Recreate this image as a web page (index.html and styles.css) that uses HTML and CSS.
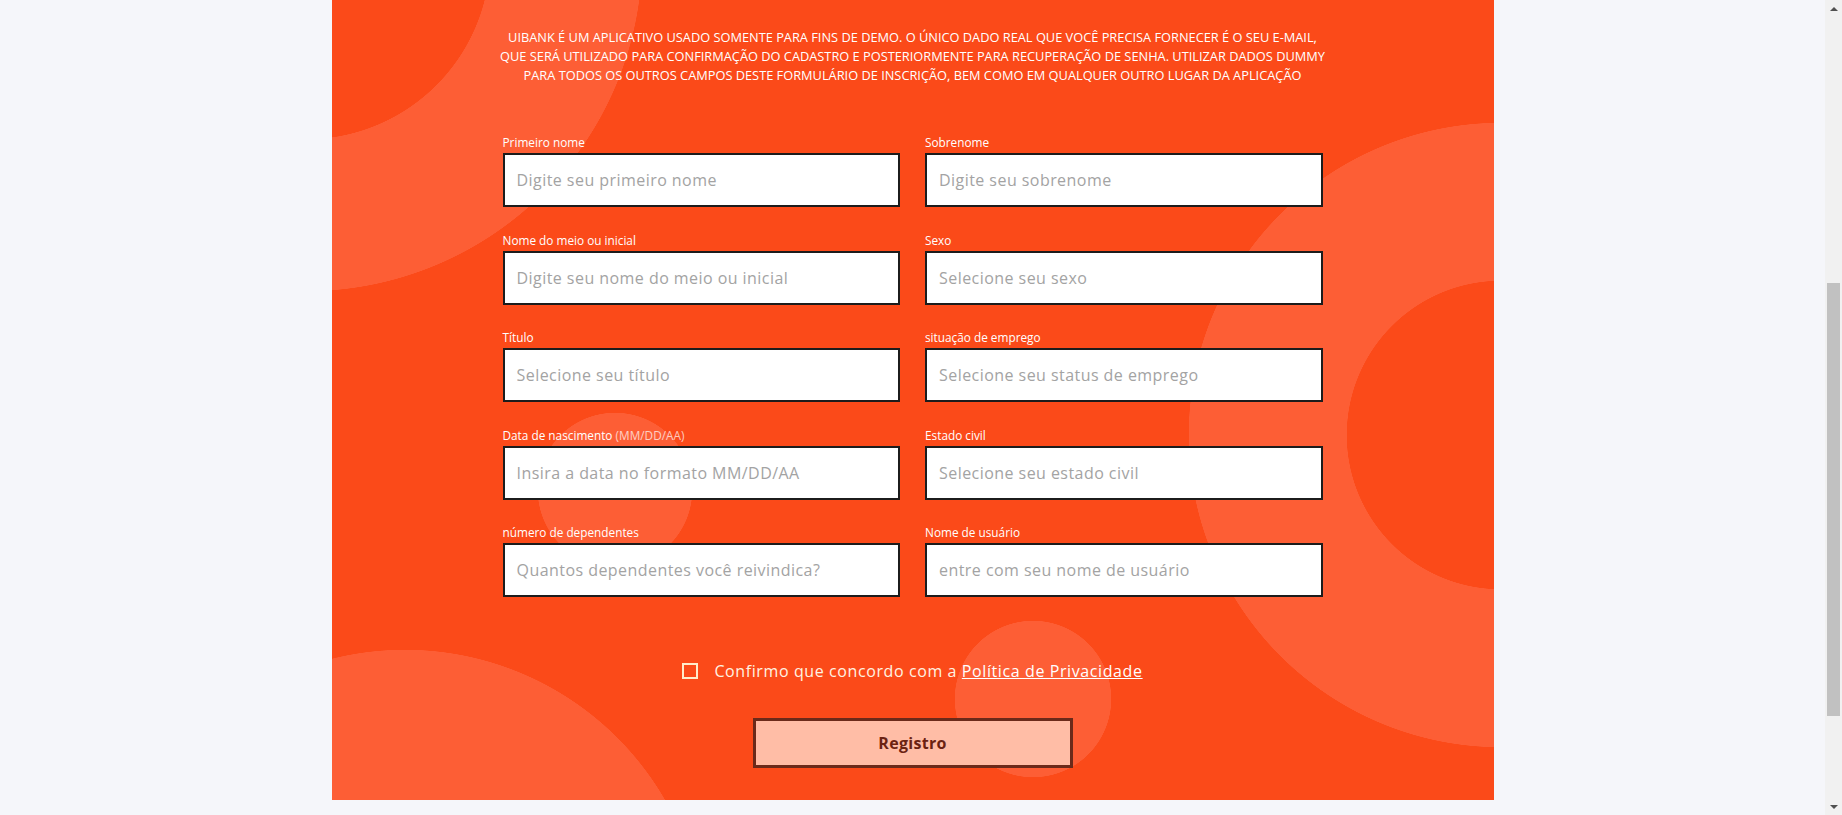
FILE: index.html
```html
<!DOCTYPE html>
<html lang="pt-BR">
<head>
<meta charset="utf-8">
<title>UIBank - Registro</title>
<link rel="stylesheet" href="styles.css">
</head>
<body>
<main class="panel">
  <section class="panel-body">
    <p class="intro">UIBANK É UM APLICATIVO USADO SOMENTE PARA FINS DE DEMO. O ÚNICO DADO REAL QUE VOCÊ PRECISA FORNECER É O SEU E-MAIL,<br>QUE SERÁ UTILIZADO PARA CONFIRMAÇÃO DO CADASTRO E POSTERIORMENTE PARA RECUPERAÇÃO DE SENHA. UTILIZAR DADOS DUMMY<br>PARA TODOS OS OUTROS CAMPOS DESTE FORMULÁRIO DE INSCRIÇÃO, BEM COMO EM QUALQUER OUTRO LUGAR DA APLICAÇÃO</p>
    <form class="form">
      <div class="grid">
        <label class="field"><span class="label">Primeiro nome</span><input class="input" type="text" placeholder="Digite seu primeiro nome"></label>
        <label class="field"><span class="label">Sobrenome</span><input class="input" type="text" placeholder="Digite seu sobrenome"></label>
        <label class="field"><span class="label">Nome do meio ou inicial</span><input class="input" type="text" placeholder="Digite seu nome do meio ou inicial"></label>
        <label class="field"><span class="label">Sexo</span><input class="input" type="text" placeholder="Selecione seu sexo"></label>
        <label class="field"><span class="label">Título</span><input class="input" type="text" placeholder="Selecione seu título"></label>
        <label class="field"><span class="label">situação de emprego</span><input class="input" type="text" placeholder="Selecione seu status de emprego"></label>
        <label class="field"><span class="label">Data de nascimento <span class="hint">(MM/DD/AA)</span></span><input class="input" type="text" placeholder="Insira a data no formato MM/DD/AA"></label>
        <label class="field"><span class="label">Estado civil</span><input class="input" type="text" placeholder="Selecione seu estado civil"></label>
        <label class="field"><span class="label">número de dependentes</span><input class="input" type="text" placeholder="Quantos dependentes você reivindica?"></label>
        <label class="field"><span class="label">Nome de usuário</span><input class="input" type="text" placeholder="entre com seu nome de usuário"></label>
      </div>
      <label class="agree"><span class="box"></span><span>Confirmo que concordo com a <a class="link" href="#">Política de Privacidade</a></span></label>
      <div class="actions"><button class="submit" type="button">Registro</button></div>
    </form>
  </section>
</main>
<div class="scrollbar" aria-hidden="true">
  <div class="sb-btn"><span class="sb-up"></span></div>
  <div class="sb-track"><div class="sb-thumb"></div></div>
  <div class="sb-btn"><span class="sb-down"></span></div>
</div>
</body>
</html>
```
FILE: styles.css
```css
html, body {
  margin: 0;
  padding: 0;
}
body {
  background: #f5f6fa;
  font-family: "Open Sans", "Noto Sans", sans-serif;
  padding-right: 17px;
}
.panel {
  max-width: 1162px;
  margin: 0 auto 15px;
  background: #fb4a19;
}
.panel-body {
  height: 800px;
  box-sizing: border-box;
  padding-top: 28px;
  overflow: hidden;
  background:
    radial-gradient(circle at 283px 490px, #fd5e35 77px, transparent 77.5px),
    radial-gradient(circle at 701px 699px, #fd5e35 78px, transparent 78.5px),
    radial-gradient(circle at -26px -45px, transparent 184px, #fd5e35 184.5px, #fd5e35 336px, transparent 336.5px),
    radial-gradient(circle at 1169px 435px, transparent 154px, #fd5e35 154.5px, #fd5e35 312px, transparent 312.5px),
    radial-gradient(circle at 73px 950px, #fd5e35 300px, transparent 300.5px),
    #fb4a19;
}
.intro {
  margin: 0 auto;
  text-align: center;
  color: #fff;
  font-size: 12.8px;
  line-height: 19px;
}
.form {
  width: 820px;
  margin: 49px auto 0;
}
.grid {
  display: grid;
  grid-template-columns: 1fr 1fr;
  column-gap: 25px;
  row-gap: 24.5px;
}
.field {
  display: flex;
  flex-direction: column;
  gap: 3px;
}
.label {
  color: #fff;
  font-size: 11.8px;
  line-height: 16px;
}
.hint {
  opacity: 0.7;
}
.input {
  box-sizing: border-box;
  height: 54px;
  border: 2px solid #1c1c1c;
  background: #fff;
  padding: 0 12px;
  font-family: inherit;
  font-size: 16px;
  letter-spacing: 0.45px;
  color: #333;
  outline: none;
}
.input::placeholder {
  color: #a3a3a3;
}
.agree {
  margin-top: 62px;
  display: flex;
  align-items: center;
  justify-content: center;
  gap: 16px;
  color: #fff3e2;
  font-size: 16px;
  letter-spacing: 0.6px;
  line-height: 24px;
}
.box {
  width: 16px;
  height: 16px;
  box-sizing: border-box;
  border: 2px solid #ffeccb;
}
.link {
  color: #fff;
  text-decoration: underline;
}
.actions {
  margin-top: 35px;
  display: flex;
  justify-content: center;
}
.submit {
  width: 320px;
  height: 50px;
  box-sizing: border-box;
  border: 3px solid #6b2a1a;
  background: #ffbda6;
  color: #6b2212;
  font-family: inherit;
  font-weight: 700;
  font-size: 16px;
  letter-spacing: 0.3px;
}
.scrollbar {
  position: fixed;
  top: 0;
  right: 0;
  width: 17px;
  height: 100vh;
  display: flex;
  flex-direction: column;
  background: #f1f1f1;
}
.sb-btn {
  height: 17px;
  display: flex;
  align-items: center;
  justify-content: center;
}
.sb-up {
  width: 0;
  height: 0;
  border-left: 4px solid transparent;
  border-right: 4px solid transparent;
  border-bottom: 4px solid #505050;
}
.sb-down {
  width: 0;
  height: 0;
  border-left: 4px solid transparent;
  border-right: 4px solid transparent;
  border-top: 4px solid #505050;
}
.sb-track {
  flex: 1;
  padding-top: 266px;
}
.sb-thumb {
  margin-left: 2px;
  width: 13px;
  height: 433px;
  background: #c1c1c1;
}
```
